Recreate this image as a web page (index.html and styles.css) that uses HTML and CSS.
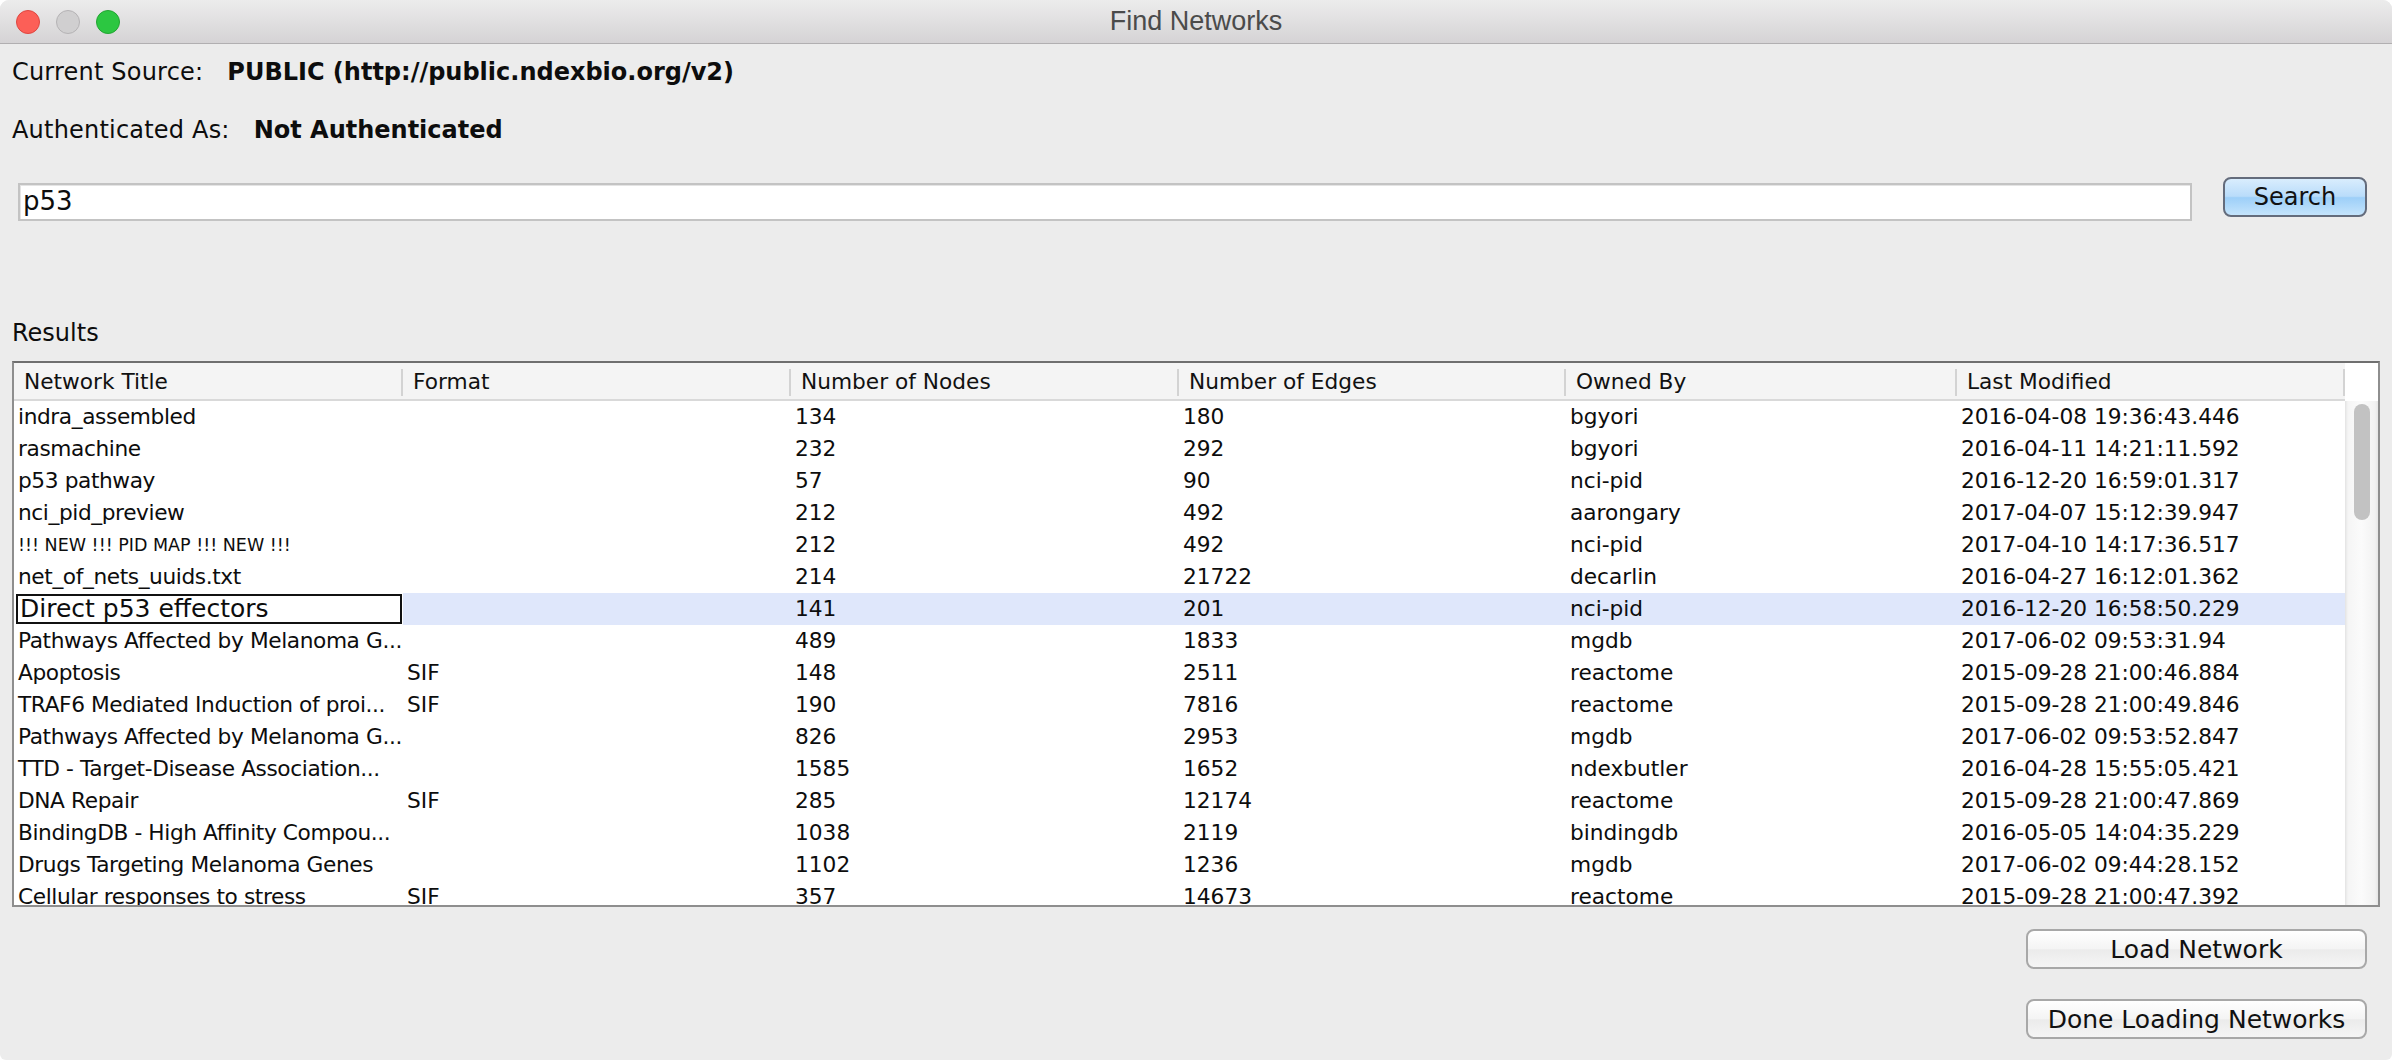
FILE: index.html
```html
<!DOCTYPE html>
<html>
<head>
<meta charset="utf-8">
<title>Find Networks</title>
<link rel="stylesheet" href="styles.css">
</head>
<body>
<div class="window">
  <div class="titlebar">
    <div class="lights">
      <span class="light red"></span>
      <span class="light min"></span>
      <span class="light max"></span>
    </div>
    <div class="title">Find Networks</div>
    <div></div>
  </div>
  <div class="content">
    <div class="info first"><span>Current Source:</span><b>PUBLIC (http://public.ndexbio.org/v2)</b></div>
    <div class="info second"><span>Authenticated As:</span><b>Not Authenticated</b></div>
    <div class="search-row">
      <div class="field">p53</div>
      <button class="btn btn-blue search-btn">Search</button>
    </div>
    <div class="results-label">Results</div>
    <div class="table">
      <div class="grid-area">
        <div class="thead">
          <div class="th">Network Title</div>
          <div class="th">Format</div>
          <div class="th">Number of Nodes</div>
          <div class="th">Number of Edges</div>
          <div class="th">Owned By</div>
          <div class="th">Last Modified</div>
        </div>
        <div class="tbody">
          <div class="tr"><div class="td name">indra_assembled</div><div class="td"></div><div class="td">134</div><div class="td">180</div><div class="td">bgyori</div><div class="td">2016-04-08 19:36:43.446</div></div>
          <div class="tr"><div class="td name">rasmachine</div><div class="td"></div><div class="td">232</div><div class="td">292</div><div class="td">bgyori</div><div class="td">2016-04-11 14:21:11.592</div></div>
          <div class="tr"><div class="td name">p53 pathway</div><div class="td"></div><div class="td">57</div><div class="td">90</div><div class="td">nci-pid</div><div class="td">2016-12-20 16:59:01.317</div></div>
          <div class="tr"><div class="td name">nci_pid_preview</div><div class="td"></div><div class="td">212</div><div class="td">492</div><div class="td">aarongary</div><div class="td">2017-04-07 15:12:39.947</div></div>
          <div class="tr"><div class="td name small">!!! NEW !!! PID MAP !!! NEW !!!</div><div class="td"></div><div class="td">212</div><div class="td">492</div><div class="td">nci-pid</div><div class="td">2017-04-10 14:17:36.517</div></div>
          <div class="tr"><div class="td name">net_of_nets_uuids.txt</div><div class="td"></div><div class="td">214</div><div class="td">21722</div><div class="td">decarlin</div><div class="td">2016-04-27 16:12:01.362</div></div>
          <div class="tr sel"><div class="td edit">Direct p53 effectors</div><div class="td"></div><div class="td">141</div><div class="td">201</div><div class="td">nci-pid</div><div class="td">2016-12-20 16:58:50.229</div></div>
          <div class="tr"><div class="td name">Pathways Affected by Melanoma G...</div><div class="td"></div><div class="td">489</div><div class="td">1833</div><div class="td">mgdb</div><div class="td">2017-06-02 09:53:31.94</div></div>
          <div class="tr"><div class="td name">Apoptosis</div><div class="td">SIF</div><div class="td">148</div><div class="td">2511</div><div class="td">reactome</div><div class="td">2015-09-28 21:00:46.884</div></div>
          <div class="tr"><div class="td name">TRAF6 Mediated Induction of proi...</div><div class="td">SIF</div><div class="td">190</div><div class="td">7816</div><div class="td">reactome</div><div class="td">2015-09-28 21:00:49.846</div></div>
          <div class="tr"><div class="td name">Pathways Affected by Melanoma G...</div><div class="td"></div><div class="td">826</div><div class="td">2953</div><div class="td">mgdb</div><div class="td">2017-06-02 09:53:52.847</div></div>
          <div class="tr"><div class="td name">TTD - Target-Disease Association...</div><div class="td"></div><div class="td">1585</div><div class="td">1652</div><div class="td">ndexbutler</div><div class="td">2016-04-28 15:55:05.421</div></div>
          <div class="tr"><div class="td name">DNA Repair</div><div class="td">SIF</div><div class="td">285</div><div class="td">12174</div><div class="td">reactome</div><div class="td">2015-09-28 21:00:47.869</div></div>
          <div class="tr"><div class="td name">BindingDB - High Affinity Compou...</div><div class="td"></div><div class="td">1038</div><div class="td">2119</div><div class="td">bindingdb</div><div class="td">2016-05-05 14:04:35.229</div></div>
          <div class="tr"><div class="td name">Drugs Targeting Melanoma Genes</div><div class="td"></div><div class="td">1102</div><div class="td">1236</div><div class="td">mgdb</div><div class="td">2017-06-02 09:44:28.152</div></div>
          <div class="tr"><div class="td name">Cellular responses to stress</div><div class="td">SIF</div><div class="td">357</div><div class="td">14673</div><div class="td">reactome</div><div class="td">2015-09-28 21:00:47.392</div></div>
        </div>
      </div>
      <div class="vscroll">
        <div class="corner"></div>
        <div class="track"><div class="thumb"></div></div>
      </div>
    </div>
    <div class="actions">
      <button class="btn action-btn">Load Network</button>
      <button class="btn action-btn">Done Loading Networks</button>
    </div>
  </div>
</div>
</body>
</html>
```
FILE: styles.css
```css
* { box-sizing: border-box; margin: 0; padding: 0; }
html, body { width: 2392px; height: 1060px; overflow: hidden; background: #ffffff; }
body { font-family: "DejaVu Sans", sans-serif; color: #0d0d0d; }

.window {
  width: 2392px; height: 1060px; background: #ececec;
  border-radius: 9px 9px 6px 6px; overflow: hidden;
  display: flex; flex-direction: column;
}

.titlebar {
  height: 44px; flex: none;
  border-bottom: 1px solid #b1afb1;
  background: linear-gradient(#ececec, #d5d3d5);
  display: grid; grid-template-columns: 1fr auto 1fr; align-items: center;
}
.lights { display: flex; gap: 16px; padding-left: 16px; }
.light { width: 24px; height: 24px; border-radius: 50%; display: block; }
.red { background: #fc5f57; border: 1px solid #df4640; }
.min { background: #d0cfd0; border: 1px solid #b5b3b5; }
.max { background: #2cc741; border: 1px solid #22a532; }
.title { font-family: "Liberation Sans", Arial, sans-serif; font-size: 27px; color: #4b4b4b; }

.content { flex: 1; display: flex; flex-direction: column; padding: 0 12px; }

.info { display: flex; gap: 24px; font-size: 24px; line-height: 36px; height: 36px; white-space: nowrap; }
.info span { letter-spacing: 0.2px; }
.info b { font-weight: bold; }
.info.first { margin-top: 10px; }
.info.second { margin-top: 22px; }

.search-row { display: flex; align-items: flex-start; gap: 31px; margin-top: 29px; padding: 0 13px 0 6px; height: 44px; }
.field {
  flex: 1; margin-top: 6px; height: 38px;
  background: #fff; border: 2px solid #c3c3c3;
  box-shadow: inset 1px 1px 0 #e4e4e4;
  font-size: 26px; line-height: 33px; padding-left: 3px; color: #0d0d0d;
}

.btn {
  font-family: "DejaVu Sans", sans-serif; color: #111;
  border: 2px solid #a8a8a8; border-radius: 8px;
  background: linear-gradient(#ffffff, #f4f4f4 50%, #ebebeb 52%, #f5f5f5);
  display: flex; align-items: center; justify-content: center;
}
.btn-blue {
  border-color: #646c7c;
  background: linear-gradient(#d9edfd, #b9dcfa 48%, #9dcff8 52%, #c4e4fc);
}
.search-btn { width: 144px; height: 40px; font-size: 24px; }

.results-label { margin-top: 97px; font-size: 24px; line-height: 30px; height: 30px; }

.table {
  margin-top: 13px; height: 546px; flex: none;
  border: 2px solid #8e8e8e; border-top-color: #6f6f6f;
  background: #fff; display: flex;
}
.grid-area { flex: 1; display: flex; flex-direction: column; overflow: hidden; }
.thead, .tr { display: grid; grid-template-columns: 389px 388px 388px 387px 391px 388px; }
.thead { height: 38px; flex: none; background: #f4f4f4; border-bottom: 2px solid #d9d9d9; }
.th {
  padding-left: 10px; padding-top: 1px; line-height: 36px; font-size: 21.7px; white-space: nowrap; color: #111;
  background: linear-gradient(#d3d3d3, #d3d3d3) right 6px / 2px 27px no-repeat;
}
.tbody { flex: 1; overflow: hidden; }
.tr { height: 32px; }
.td { padding-left: 4px; line-height: 32px; font-size: 21.7px; white-space: nowrap; overflow: hidden; }
.td.name { letter-spacing: -0.4px; }
.td.small { font-size: 17.5px; letter-spacing: 0; }
.tr.sel .td { background: #dfe7fb; }
.tr.sel .td.edit {
  background: #fff; border: 2px solid #111; margin: 1px 1px 1px 2px;
  line-height: 26px; font-size: 25px; padding-left: 2px;
}

.vscroll { width: 33px; flex: none; display: flex; flex-direction: column; }
.corner { height: 38px; background: #fff; flex: none; }
.track {
  flex: 1; padding: 3px 0 0 9px;
  background: linear-gradient(to right, #e3e3e3 0, #f5f5f5 3px, #fbfbfb 50%, #f2f2f2 calc(100% - 3px), #e6e6e6 100%);
}
.thumb { width: 16px; height: 116px; border-radius: 8px; background: #c2c2c2; }

.actions { margin-top: 22px; display: flex; flex-direction: column; align-items: flex-end; gap: 30px; padding-right: 13px; }
.action-btn { width: 341px; height: 40px; font-size: 25px; }
```
